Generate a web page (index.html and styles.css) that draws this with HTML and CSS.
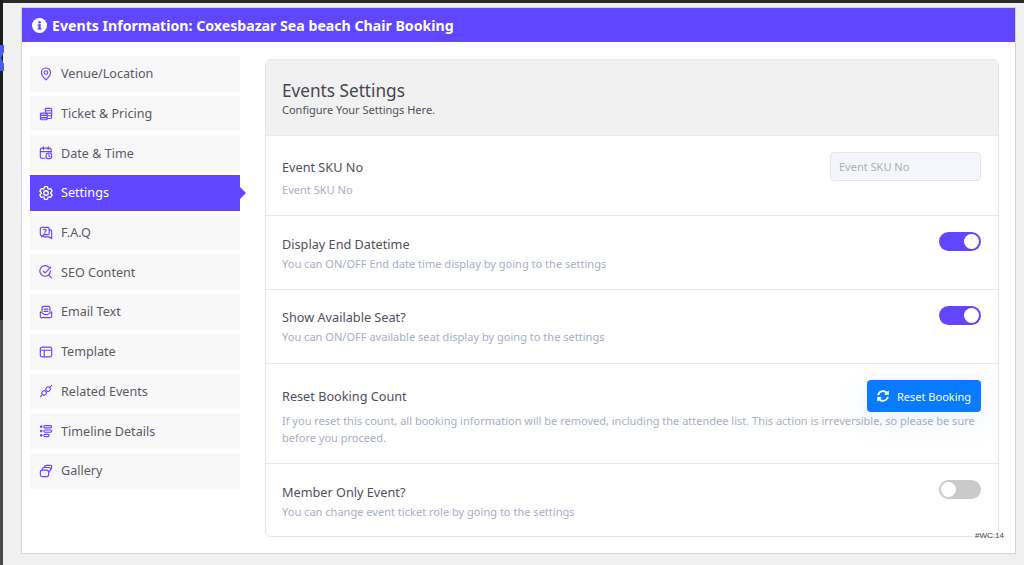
FILE: index.html
```html
<!DOCTYPE html>
<html lang="en">
<head>
    <meta charset="UTF-8">
    <meta name="viewport" content="width=device-width, initial-scale=1.0">
    <title>Events Information</title>
    <link rel="stylesheet" href="styles.css">
</head>
<body>
    <div class="edge-strip"></div>
    <svg class="edge-mark" viewBox="0 0 4 26"><path d="M0 0h4v7L1 13l3 6v7H0z" fill="#4a5cf0"/></svg>
    <div class="panel">
        <header class="panel-title">
            <svg class="info-icon" viewBox="0 0 16 16"><circle cx="8" cy="8" r="8" fill="#fff"/><rect x="6.9" y="6.8" width="2.4" height="5.2" fill="#6047ff"/><rect x="5.9" y="6.8" width="3" height="1.3" fill="#6047ff"/><rect x="5.9" y="11" width="4.3" height="1.3" fill="#6047ff"/><circle cx="8" cy="4.5" r="1.4" fill="#6047ff"/></svg>
            Events Information: Coxesbazar Sea beach Chair Booking
        </header>
        <div class="panel-body">
            <nav class="side-menu">
                <a class="menu-item"><svg class="menu-icon" viewBox="0 0 16 16"><path d="M8 1.2c-3 0-5.200 2.200-5.200 5 0 3.400 3.200 6.600 5.200 8.500 2-1.900 5.200-5.100 5.200-8.500 0-2.800-2.200-5-5.200-5z"/><circle cx="8" cy="6.300" r="2"/></svg>Venue/Location</a>
                <a class="menu-item"><svg class="menu-icon" viewBox="0 0 16 16"><rect x="1.500" y="7" width="8" height="2.600" rx="1.200"/><rect x="1.500" y="9.600" width="8" height="2.600" rx="1.200"/><rect x="1.500" y="12.200" width="8" height="2.400" rx="1.200"/><rect x="7" y="1.500" width="7.500" height="2.800" rx="1.300"/><path d="M7.500 4.300v2.700M14.500 4v7.500c0 1-.6 1.600-1.500 1.600H9.500M9.500 7h5M9.500 10h5"/></svg>Ticket &amp; Pricing</a>
                <a class="menu-item"><svg class="menu-icon" viewBox="0 0 16 16"><path d="M7 14H3.500c-1.200 0-2-.8-2-2V4.500c0-1.200.8-2 2-2h8.500c1.200 0 2 .8 2 2V7M1.500 6.500H14M5 1v3M10.500 1v3"/><circle cx="11.300" cy="11.300" r="3.300"/><path d="M11.300 9.800v1.600l1 .7"/></svg>Date &amp; Time</a>
                <a class="menu-item active"><svg class="menu-icon gear" viewBox="2 2 20 20"><path d="M9.594 3.940c.09-.542.56-.94 1.110-.94h2.593c.55 0 1.020.398 1.110.94l.213 1.281c.063.374.313.686.645.87.074.04.147.083.22.127.325.196.72.257 1.075.124l1.217-.456a1.125 1.125 0 0 1 1.370.49l1.296 2.247a1.125 1.125 0 0 1-.26 1.431l-1.003.827c-.293.241-.438.613-.43.992a7.723 7.723 0 0 1 0 .255c-.008.378.137.75.43.991l1.004.827c.424.35.534.955.26 1.430l-1.298 2.247a1.125 1.125 0 0 1-1.369.491l-1.217-.456c-.355-.133-.75-.072-1.076.124a6.470 6.470 0 0 1-.22.128c-.331.183-.581.495-.644.869l-.213 1.281c-.09.543-.56.94-1.110.94h-2.594c-.55 0-1.019-.398-1.110-.94l-.213-1.281c-.062-.374-.312-.686-.644-.87a6.520 6.520 0 0 1-.22-.127c-.325-.196-.72-.257-1.076-.124l-1.217.456a1.125 1.125 0 0 1-1.369-.49l-1.297-2.247a1.125 1.125 0 0 1 .26-1.431l1.004-.827c.292-.24.437-.613.43-.991a6.932 6.932 0 0 1 0-.255c.007-.38-.138-.751-.43-.992l-1.004-.827a1.125 1.125 0 0 1-.26-1.430l1.297-2.247a1.125 1.125 0 0 1 1.370-.491l1.216.456c.356.133.751.072 1.076-.124.072-.044.146-.086.22-.128.332-.183.582-.495.644-.869l.214-1.280z"/><circle cx="12" cy="12" r="3.200"/></svg>Settings</a>
                <a class="menu-item"><svg class="menu-icon" viewBox="0 0 16 16"><path d="M3.500 1.500H10c1 0 1.700.7 1.700 1.700v5c0 1-.7 1.700-1.700 1.700H5.500L3 12.500v-1.600h-.2c-.8 0-1.300-.7-1.300-1.500V3.200c0-1 .9-1.700 2-1.700z"/><path d="M11.700 4.500H13c.9 0 1.500.6 1.500 1.500v8.500l-2.500-2H6.500c-.8 0-1.500-.6-1.500-1.600"/><path d="M5.300 4.500c.2-1 2.900-1.200 3 .3 0 1-1.500 1-1.500 2.200M6.800 8.300v.3"/></svg>F.A.Q</a>
                <a class="menu-item"><svg class="menu-icon" viewBox="0 0 16 16"><path d="M11.500 2.800A6 6 0 1 0 13 7M5 7l2 2 6.500-6.500M10.800 11l3.500 3.800"/></svg>SEO Content</a>
                <a class="menu-item"><svg class="menu-icon" viewBox="0 0 16 16"><path d="M3.500 7V3.300c0-1 .8-1.800 1.800-1.800h5.400c1 0 1.800.8 1.800 1.800V7M5.800 4.700h4.400M5.800 7.300h4.400"/><path d="M1.500 7.800l5 3.200h3l5-3.200v5c0 1-.8 1.700-1.800 1.700H3.300c-1 0-1.800-.7-1.800-1.700z"/></svg>Email Text</a>
                <a class="menu-item"><svg class="menu-icon" viewBox="0 0 16 16"><rect x="1.500" y="2.500" width="13" height="11" rx="2"/><path d="M1.500 6h13M6 6v7.500"/></svg>Template</a>
                <a class="menu-item"><svg class="menu-icon" viewBox="0 0 16 16"><path d="M1.500 14.500l2-2M12.500 3.500l2-2"/><rect x="3.500" y="7.800" width="4.700" height="4.700" rx="1.500" transform="rotate(45 5.850 10.150)"/><rect x="8" y="3.500" width="4.700" height="4.700" rx="1.500" transform="rotate(45 10.350 5.850)"/></svg>Related Events</a>
                <a class="menu-item"><svg class="menu-icon" viewBox="0 0 16 16"><circle cx="2.500" cy="3" r=".8"/><circle cx="2.500" cy="8" r=".8"/><circle cx="2.500" cy="13" r=".8"/><rect x="5.500" y="1.800" width="9" height="2.600" rx="1.300"/><rect x="5.500" y="6.800" width="9" height="2.600" rx="1.300"/><rect x="5.500" y="11.800" width="6" height="2.600" rx="1.300"/></svg>Timeline Details</a>
                <a class="menu-item"><svg class="menu-icon" viewBox="0 0 16 16"><rect x="1.500" y="7" width="9.500" height="7.500" rx="2.500"/><path d="M3.500 6.800c.2-1.500 1.200-2.800 2.800-2.800h5.200c1.400 0 1.900 1.300 1.500 2.800-.2.900-.7 2-1.700 2.700"/><path d="M6 3.800c.2-1.400 1.200-2.300 2.500-2.300H13c1.300 0 1.800 1.200 1.500 2.500-.2 1-.6 1.800-1.200 2.400"/></svg>Gallery</a>
            </nav>
            <section class="settings">
                <div class="settings-head">
                    <h2>Events Settings</h2>
                    <p>Configure Your Settings Here.</p>
                </div>
                <div class="row row-sku">
                    <div class="row-top">
                        <h3>Event SKU No</h3>
                        <input class="sku-input" type="text" placeholder="Event SKU No">
                    </div>
                    <p class="hint">Event SKU No</p>
                </div>
                <div class="row row-toggle">
                    <div class="row-top">
                        <h3>Display End Datetime</h3>
                        <span class="toggle on"></span>
                    </div>
                    <p class="hint">You can ON/OFF End date time display by going to the settings</p>
                </div>
                <div class="row row-toggle row-seat">
                    <div class="row-top">
                        <h3>Show Available Seat?</h3>
                        <span class="toggle on"></span>
                    </div>
                    <p class="hint">You can ON/OFF available seat display by going to the settings</p>
                </div>
                <div class="row row-reset">
                    <div class="row-top">
                        <h3>Reset Booking Count</h3>
                        <button class="reset-btn" type="button"><svg class="sync-icon" viewBox="0 0 512 512"><path fill="#fff" d="M370.700 133.300C339.500 104 298.900 88 255.800 88c-77.500.1-144.300 53.200-162.800 126.900-1.300 5.400-6.100 9.200-11.700 9.200H24.100c-7.500 0-13.200-6.800-11.800-14.200C33.900 94.900 134.800 8 256 8c66.400 0 126.800 26.100 171.300 68.700L463 41c15.100-15.100 41-4.400 41 17v134c0 13.300-10.700 24-24 24H346c-21.400 0-32.100-25.900-17-41zM32 296h134c21.400 0 32.100 25.900 17 41l-41.700 41.700c31.200 29.300 71.800 45.300 114.900 45.300 77.400-.1 144.300-53.100 162.800-126.800 1.300-5.400 6.100-9.200 11.700-9.200h57.300c7.500 0 13.200 6.800 11.800 14.200C478.100 417.100 377.200 504 256 504c-66.400 0-126.800-26.100-171.300-68.700L49 471c-15.100 15.100-41 4.400-41-17V320c0-13.300 10.700-24 24-24z"/></svg>Reset Booking</button>
                    </div>
                    <p class="hint">If you reset this count, all booking information will be removed, including the attendee list. This action is irreversible, so please be sure before you proceed.</p>
                </div>
                <div class="row row-toggle">
                    <div class="row-top">
                        <h3>Member Only Event?</h3>
                        <span class="toggle"></span>
                    </div>
                    <p class="hint">You can change event ticket role by going to the settings</p>
                </div>
            </section>
            <span class="wc-tag">#WC:14</span>
        </div>
    </div>
</body>
</html>
```

FILE: styles.css
```css
* {
    margin: 0;
    padding: 0;
    box-sizing: border-box;
}

body {
    font-family: "Noto Sans", "Open Sans", sans-serif;
    color: #50505c;
    background: #f0f0f0;
    height: 565px;
    overflow: hidden;
    border-top: 3px solid #2a2a2a;
    padding: 4px 8px 0 21px;
}

.edge-strip {
    position: absolute;
    left: 0;
    top: 0;
    width: 3px;
    height: 565px;
    background: linear-gradient(#1c1c1c 320px, #4a4a4a 320px);
}

.edge-mark {
    position: absolute;
    left: 0;
    top: 45px;
    width: 4px;
    height: 26px;
}

.panel {
    width: 995px;
    height: 547px;
    background: #fff;
    border: 1px solid #d4d4d8;
}

.panel-title {
    display: flex;
    align-items: center;
    gap: 5px;
    height: 34px;
    padding-left: 10px;
    background: #6047ff;
    color: #fff;
    font-size: 14.15px;
    font-weight: 700;
}

.info-icon {
    width: 15px;
    height: 15px;
}

.panel-body {
    position: relative;
    display: flex;
    gap: 25px;
    height: 511px;
    padding: 14px 16px 0 8px;
}

.side-menu {
    display: flex;
    flex-direction: column;
    gap: 4px;
    width: 210px;
    flex: none;
}

.menu-item {
    position: relative;
    display: flex;
    align-items: center;
    gap: 8px;
    height: 35.7px;
    padding-left: 9px;
    background: #f8f8f8;
    font-size: 12.6px;
    color: #5a5a66;
}

.menu-item.active {
    background: #6047ff;
    color: #fff;
}

.menu-item.active::after {
    content: "";
    position: absolute;
    right: -6px;
    top: 50%;
    margin-top: -6px;
    border-left: 6px solid #6047ff;
    border-top: 6px solid transparent;
    border-bottom: 6px solid transparent;
}

.menu-icon {
    width: 14px;
    height: 14px;
    flex: none;
    fill: none;
    stroke: #6047ff;
    stroke-width: 1.3;
    stroke-linecap: round;
    stroke-linejoin: round;
}

.menu-icon.gear {
    stroke-width: 1.9;
}

.active .menu-icon {
    stroke: #fff;
}

.settings {
    flex: 1;
    height: 478px;
    margin-top: 3px;
    border: 1px solid #e4e4e4;
    border-radius: 6px;
    overflow: hidden;
}

.settings-head {
    height: 75px;
    padding: 19px 16px 0;
    background: #f1f1f1;
}

.settings-head h2 {
    font-size: 17.2px;
    font-weight: 400;
    line-height: 23px;
    color: #46464f;
}

.settings-head p {
    font-size: 11px;
    line-height: 15px;
    color: #50505c;
}

.row {
    padding: 0 17px 0 16px;
    border-top: 1px solid #e8e8e8;
}

.row-top {
    display: flex;
    justify-content: space-between;
    align-items: flex-start;
}

h3 {
    font-size: 12.7px;
    font-weight: 400;
    color: #50505c;
}

.hint {
    font-size: 11.05px;
    line-height: 17px;
    color: #a6aec4;
}

.row-sku {
    height: 80px;
    padding-top: 16px;
}

.row-sku h3 {
    line-height: 30px;
}

.row-sku .hint {
    margin-top: -1px;
}

.sku-input {
    width: 151px;
    height: 29px;
    padding: 0 8px;
    border: 1px solid #e3e6ee;
    border-radius: 4px;
    background: #f4f6fb;
    font-family: inherit;
    font-size: 11px;
}

.sku-input::placeholder {
    color: #a9aebb;
}

.row-toggle {
    height: 74px;
    padding-top: 16px;
}

.row-toggle h3 {
    line-height: 24px;
}

.row-toggle .hint {
    margin-top: -1px;
}

.row-seat h3 {
    line-height: 22px;
}

.row-seat .hint {
    margin-top: 0;
}

.toggle {
    position: relative;
    width: 42px;
    height: 19px;
    border-radius: 10px;
    background: #cacaca;
}

.toggle::after {
    content: "";
    position: absolute;
    left: 2px;
    top: 2px;
    width: 15px;
    height: 15px;
    border-radius: 50%;
    background: #fff;
}

.toggle.on {
    background: #6047ff;
}

.toggle.on::after {
    left: 25px;
}

.row-reset {
    height: 100px;
    padding-top: 16px;
}

.row-reset h3 {
    line-height: 33px;
}

.row-reset .hint {
    margin-top: -1px;
    font-size: 11px;
}

.reset-btn {
    display: flex;
    align-items: center;
    gap: 8px;
    width: 114px;
    height: 32px;
    padding-left: 10px;
    border: 0;
    border-radius: 4px;
    background: #087bff;
    color: #fff;
    font-family: inherit;
    font-size: 11px;
    box-shadow: 0 8px 30px rgba(8, 123, 255, 0.1);
}

.sync-icon {
    width: 12px;
    height: 12px;
}

.wc-tag {
    position: absolute;
    right: 11px;
    bottom: 12px;
    font-family: "Liberation Sans", sans-serif;
    font-size: 8px;
    line-height: 10px;
    color: #444;
}
```
